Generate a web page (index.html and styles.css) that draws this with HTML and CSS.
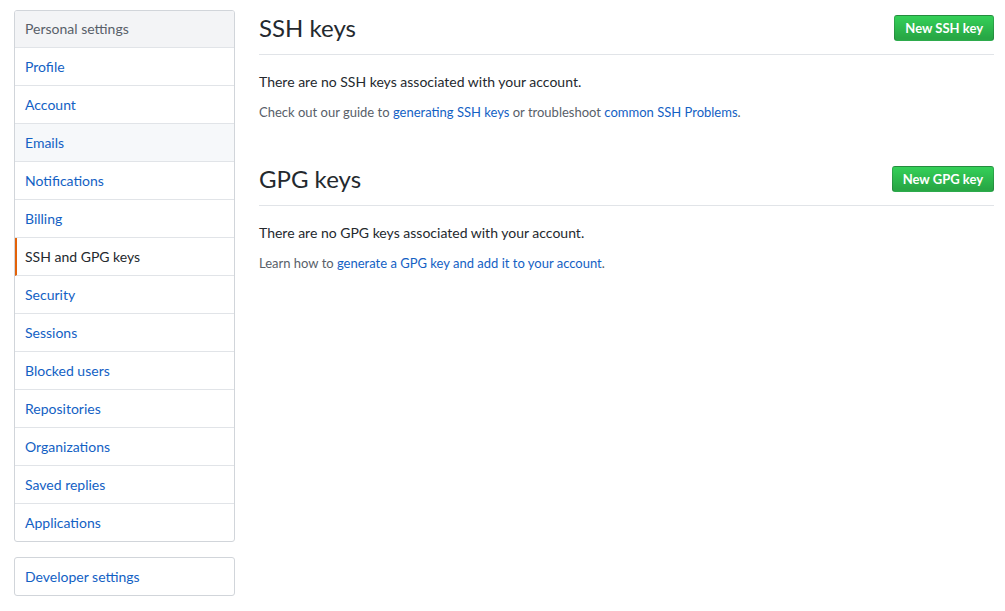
FILE: index.html
```html
<!DOCTYPE html>
<html lang="en">
<head>
    <meta charset="UTF-8">
    <meta name="viewport" content="width=device-width, initial-scale=1.0">
    <title>SSH and GPG keys</title>
    <link rel="stylesheet" href="styles.css">
</head>
<body>
    <div class="container">
        <!-- sidebar -->
        <div class="sidebar">
            <nav class="menu">
                <h3 class="menu-heading">Personal settings</h3>
                <a class="menu-item" href="#">Profile</a>
                <a class="menu-item" href="#">Account</a>
                <a class="menu-item hover" href="#">Emails</a>
                <a class="menu-item" href="#">Notifications</a>
                <a class="menu-item" href="#">Billing</a>
                <a class="menu-item selected" href="#">SSH and GPG keys</a>
                <a class="menu-item" href="#">Security</a>
                <a class="menu-item" href="#">Sessions</a>
                <a class="menu-item" href="#">Blocked users</a>
                <a class="menu-item" href="#">Repositories</a>
                <a class="menu-item" href="#">Organizations</a>
                <a class="menu-item" href="#">Saved replies</a>
                <a class="menu-item" href="#">Applications</a>
            </nav>
            <nav class="menu">
                <a class="menu-item" href="#">Developer settings</a>
            </nav>
        </div>

        <!-- main -->
        <div class="main">
            <div class="subhead">
                <h2 class="subhead-heading">SSH keys</h2>
                <a class="btn" href="#">New SSH key</a>
            </div>
            <p>There are no SSH keys associated with your account.</p>
            <p class="note">Check out our guide to <a href="#">generating SSH keys</a> or troubleshoot <a href="#">common SSH Problems</a>.</p>

            <div class="subhead spacious">
                <h2 class="subhead-heading">GPG keys</h2>
                <a class="btn" href="#">New GPG key</a>
            </div>
            <p>There are no GPG keys associated with your account.</p>
            <p class="note">Learn how to <a href="#">generate a GPG key and add it to your account</a>.</p>
        </div>
    </div>
</body>
</html>
```

FILE: styles.css
```css
body {
    margin: 0;
    font-family: Lato, "Liberation Sans", Arial, sans-serif;
    font-size: 14px;
    line-height: 1.5;
    color: #24292e;
    background-color: #fff;
}
a {
    color: #1361c4;
    text-decoration: none;
}
.container {
    display: grid;
    grid-template-columns: 221px 1fr;
    gap: 24px;
    padding: 10px 11px 0 14px;
}
.menu {
    border: 1px solid #d1d5da;
    border-radius: 3px;
    margin-bottom: 15px;
    overflow: hidden;
}
.menu-heading {
    margin: 0;
    padding: 7px 10px 8px;
    font-size: 14px;
    font-weight: 400;
    line-height: 21px;
    color: #586069;
    background-color: #f3f4f6;
    border-bottom: 1px solid #e1e4e8;
}
.menu-item {
    display: block;
    padding: 8px 10px;
    line-height: 21px;
    border-bottom: 1px solid #e1e4e8;
}
.menu-item:last-child {
    border-bottom: 0;
}
.menu-item.hover {
    background-color: #f6f8fa;
}
.menu-item.selected {
    color: #24292e;
    padding-left: 8px;
    border-left: 2px solid #e36209;
}
.subhead {
    display: flex;
    align-items: center;
    padding-bottom: 8px;
    margin-bottom: 16px;
    border-bottom: 1px solid #e1e4e8;
}
.subhead.spacious {
    margin-top: 38px;
}
.subhead-heading {
    flex: 1;
    margin: 0;
    font-size: 24px;
    font-weight: 400;
    line-height: 36px;
}
.btn {
    padding: 2px 10px;
    font-size: 13px;
    font-weight: bold;
    line-height: 20px;
    color: #fff;
    background-color: #28a745;
    background-image: linear-gradient(-180deg, #34d058 0%, #28a745 90%);
    border: 1px solid rgba(27, 31, 35, 0.2);
    border-radius: 3px;
}
.main p {
    margin: 0 0 10px;
}
.note {
    font-size: 13px;
    line-height: 21px;
    color: #586069;
}
```
